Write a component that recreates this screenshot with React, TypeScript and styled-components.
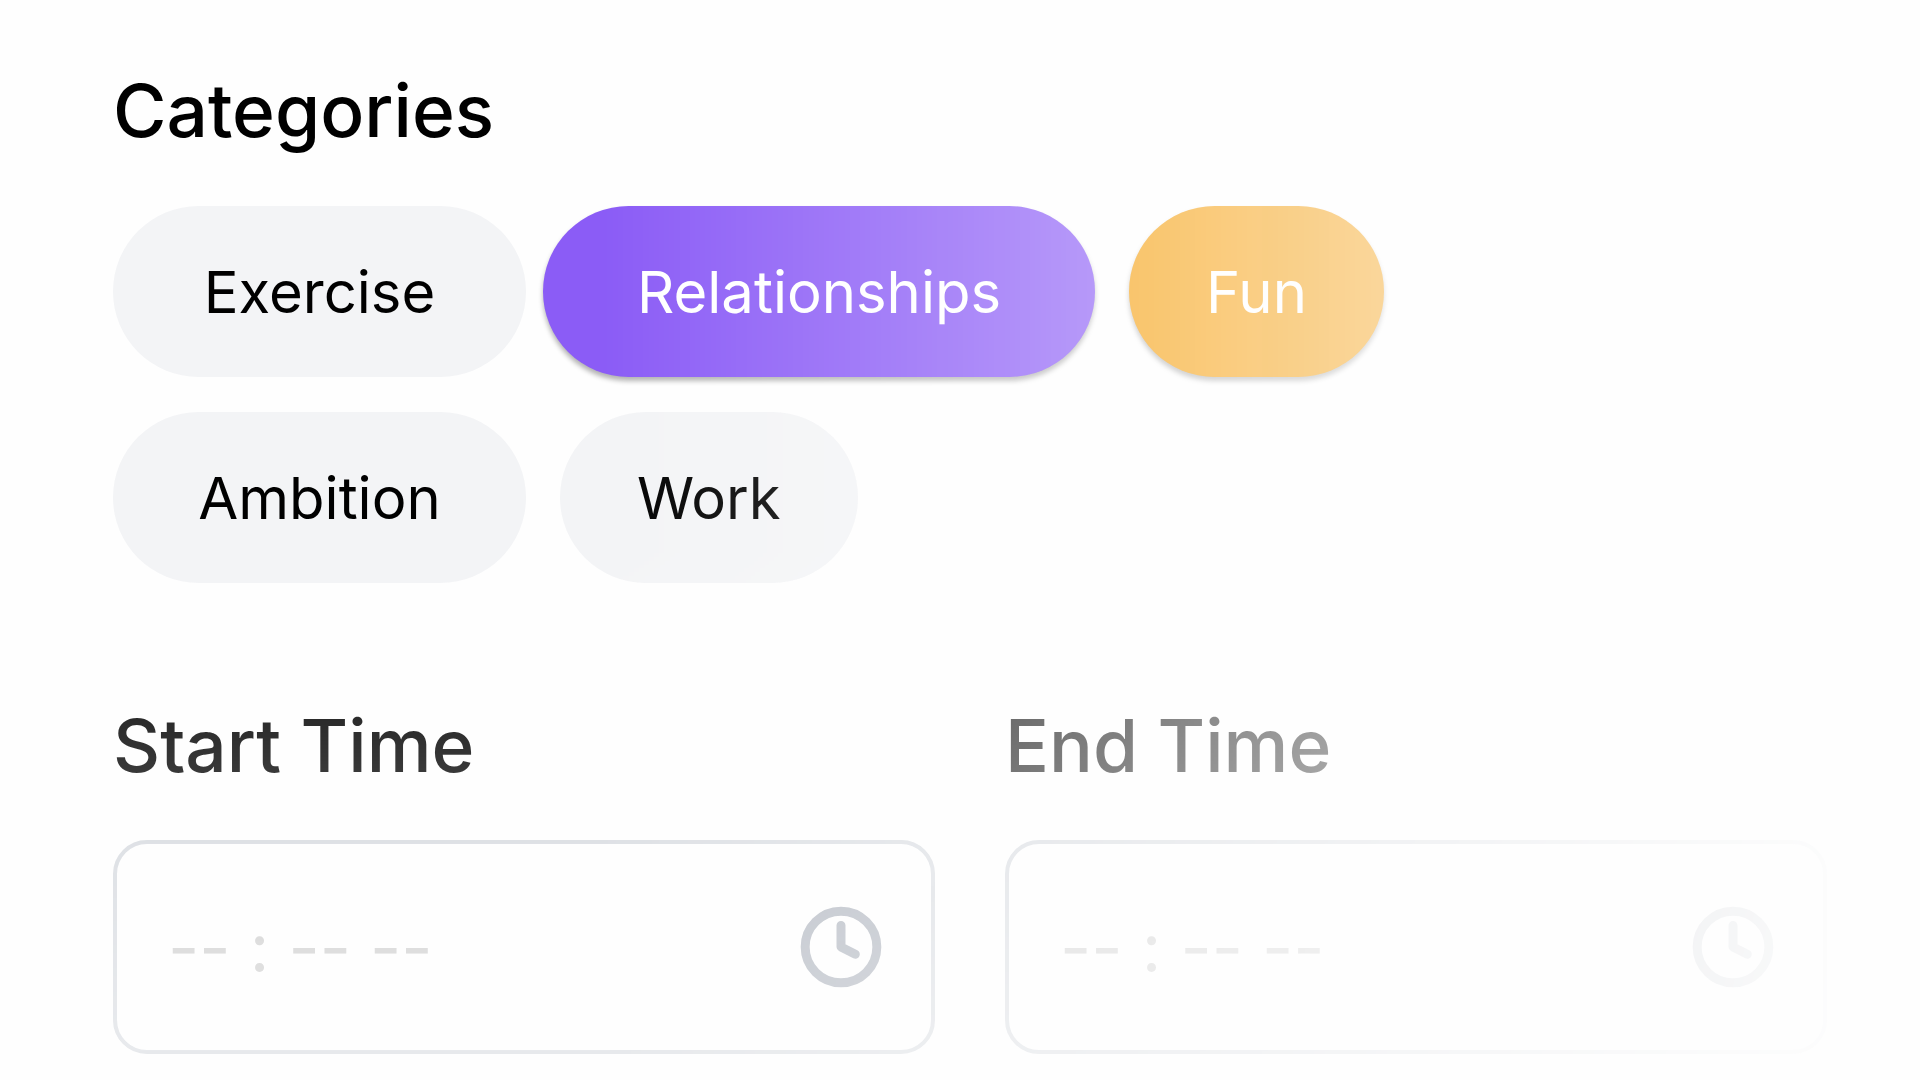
import React, { useState } from "react";
import styled, { createGlobalStyle } from "styled-components";
import { Clock } from "lucide-react";

const GlobalStyle = createGlobalStyle`
  *, *::before, *::after { box-sizing: border-box; }
  body {
    margin: 0;
    background: #fefefe;
    font-family: Inter, "Liberation Sans", sans-serif;
  }
`;

/* The form fades out towards its right and bottom edges. */
const Form = styled.form`
  min-height: 100vh;
  padding: 67px 93px 24px 113px;
  mask-image: linear-gradient(to right, #000 31.5%, transparent 100%),
    linear-gradient(to bottom, #000 51%, rgba(0, 0, 0, 0.47) 100%);
  mask-composite: intersect;
`;

const Categories = styled.fieldset`
  margin: 0;
  padding: 0;
  border: 0;
  min-width: 0;
`;

const Legend = styled.legend`
  padding: 0;
  font-size: 73px;
  font-weight: 500;
  line-height: 88px;
  color: #000;
`;

const PillRow = styled.div`
  display: flex;
  flex-wrap: wrap;
  gap: 17px;
  margin-top: 51px;

  & + & {
    margin-top: 35px;
  }
`;

type Tone = "plain" | "violet" | "amber";
type Size = "fit" | "medium" | "roomy";

const tones: Record<Tone, { background: string; color: string; shadow: string }> = {
  plain: { background: "#f3f4f6", color: "#000", shadow: "none" },
  violet: { background: "#8b5cf6", color: "#fff", shadow: "0 4px 5px rgba(0, 0, 0, 0.3)" },
  amber: { background: "#f59e0b", color: "#fff", shadow: "0 4px 5px rgba(0, 0, 0, 0.3)" },
};

const sizes: Record<Size, { minWidth: string; padding: string }> = {
  fit: { minWidth: "0", padding: "77px" },
  medium: { minWidth: "413px", padding: "77px" },
  roomy: { minWidth: "413px", padding: "94px" },
};

const Pill = styled.button<{ $tone: Tone; $size: Size; $spaced?: boolean }>`
  min-width: ${(p) => sizes[p.$size].minWidth};
  margin-left: ${(p) => (p.$spaced ? "17px" : "0")};
  padding: 43px ${(p) => sizes[p.$size].padding} 41px;
  border: 0;
  border-radius: 86px;
  background: ${(p) => tones[p.$tone].background};
  color: ${(p) => tones[p.$tone].color};
  box-shadow: ${(p) => tones[p.$tone].shadow};
  font: inherit;
  font-size: 58px;
  line-height: 87px;
  cursor: pointer;
`;

const Times = styled.div`
  display: grid;
  grid-template-columns: 1fr 1fr;
  gap: 70px;
  margin-top: 119px;
`;

const Field = styled.div`
  display: flex;
  flex-direction: column;
  gap: 50px;
  min-width: 0;
`;

const Label = styled.label`
  font-size: 73px;
  font-weight: 500;
  line-height: 88px;
  color: #000;
`;

const InputBox = styled.div`
  display: flex;
  align-items: center;
  padding: 59px 47px 59px 51px;
  border: 4px solid #d1d5db;
  border-radius: 34px;
`;

const TimeInput = styled.input`
  flex: 1;
  min-width: 0;
  height: 88px;
  padding: 0;
  border: 0;
  outline: 0;
  background: transparent;
  color: #000;
  font: inherit;
  font-size: 68px;
  line-height: 88px;

  &::placeholder {
    color: #c8c8c8;
    opacity: 1;
  }
`;

const categories: { name: string; tone: Tone; size: Size; spaced?: boolean }[][] = [
  [
    { name: "Exercise", tone: "plain", size: "medium" },
    { name: "Relationships", tone: "violet", size: "roomy" },
    { name: "Fun", tone: "amber", size: "fit", spaced: true },
  ],
  [
    { name: "Ambition", tone: "plain", size: "medium" },
    { name: "Work", tone: "plain", size: "fit", spaced: true },
  ],
];

function TimeField({ id, label }: { id: string; label: string }) {
  const [value, setValue] = useState("");
  return (
    <Field>
      <Label htmlFor={id}>{label}</Label>
      <InputBox>
        <TimeInput
          id={id}
          type="text"
          placeholder="-- : -- --"
          value={value}
          onChange={(e) => setValue(e.target.value)}
        />
        <Clock size={86} color="#9ca3af" strokeWidth={2.5} aria-hidden="true" />
      </InputBox>
    </Field>
  );
}

export default function App() {
  return (
    <>
      <GlobalStyle />
      <Form>
        <Categories>
          <Legend>Categories</Legend>
          {categories.map((row, i) => (
            <PillRow key={i}>
              {row.map((c) => (
                <Pill key={c.name} type="button" $tone={c.tone} $size={c.size} $spaced={c.spaced}>
                  {c.name}
                </Pill>
              ))}
            </PillRow>
          ))}
        </Categories>
        <Times>
          <TimeField id="start-time" label="Start Time" />
          <TimeField id="end-time" label="End Time" />
        </Times>
      </Form>
    </>
  );
}
